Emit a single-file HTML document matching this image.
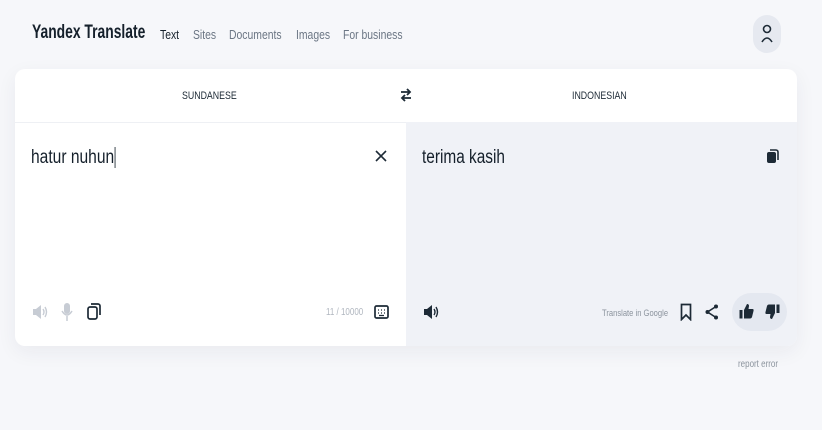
<!DOCTYPE html>
<html><head><meta charset="utf-8"><style>
*{margin:0;padding:0;box-sizing:border-box}
body{width:822px;height:430px;background:#f6f7fa;font-family:"Liberation Sans",sans-serif;color:#1d2a36;position:relative;overflow:hidden}
.a{position:absolute;white-space:nowrap;transform:scaleX(.8);transform-origin:0 0}
.b{position:absolute}
.card{position:absolute;left:15px;top:69px;width:782px;height:277px;background:#fff;border-radius:10px;overflow:hidden;box-shadow:0 6px 20px rgba(30,40,70,.06)}
.right{position:absolute;left:391px;top:53px;width:391px;height:224px;background:#f0f2f7}
.line{position:absolute;left:0;top:53px;width:391px;height:1px;background:#eef0f4}
svg{position:absolute}
</style></head><body>
<div class="a" style="left:32px;top:22px;font-size:19px;font-weight:bold;color:#15202b;transform:scaleX(.73)">Yandex Translate</div>
<div class="a" style="left:160px;top:27px;font-size:13px;color:#15202b">Text</div>
<div class="a" style="left:193px;top:27px;font-size:13px;color:#6b7684">Sites</div>
<div class="a" style="left:229px;top:27px;font-size:13px;color:#6b7684">Documents</div>
<div class="a" style="left:296px;top:27px;font-size:13px;color:#6b7684">Images</div>
<div class="a" style="left:343px;top:27px;font-size:13px;color:#6b7684">For business</div>
<div class="b" style="left:753px;top:15px;width:28px;height:38px;border-radius:14px;background:#e6e9f0"></div>
<svg style="left:760px;top:24px" width="14" height="20" viewBox="0 0 14 20"><circle cx="7" cy="5" r="3.5" fill="none" stroke="#1d2a36" stroke-width="1.6"/><path d="M2 18 Q7 10 12 18" fill="none" stroke="#1d2a36" stroke-width="1.6"/></svg>
<div class="card">
 <div class="right"></div><div class="line"></div>
 <div class="a" style="left:167px;top:21px;font-size:11px">SUNDANESE</div>
 <div class="a" style="left:557px;top:21px;font-size:11px">INDONESIAN</div>
 <svg style="left:385px;top:19px" width="12" height="14" viewBox="0 0 12 14"><path d="M1 4H10M7 1L10 4L7 7M11 10H2M5 7L2 10L5 13" fill="none" stroke="#1d2a36" stroke-width="1.8"/></svg>
 <div class="a" style="left:16px;top:78px;font-size:19px;color:#15202b;transform:scaleX(.82)">hatur nuhun<span style="border-left:1px solid #15202b;margin-left:1px"></span></div>
 <svg style="left:360px;top:81px" width="12" height="12" viewBox="0 0 12 12"><path d="M1 1L11 11M11 1L1 11" stroke="#1d2a36" stroke-width="1.6"/></svg>
 <div class="a" style="left:407px;top:78px;font-size:19px;color:#15202b;transform:scaleX(.81)">terima kasih</div>
 <svg style="left:751px;top:80px" width="13" height="15" viewBox="0 0 13 15"><rect x="1" y="3" width="9" height="11" rx="2" fill="#1d2a36"/><path d="M4 1H10a2 2 0 0 1 2 2V11" fill="none" stroke="#1d2a36" stroke-width="1.6"/></svg>
 <svg style="left:17px;top:235px" width="16" height="16" viewBox="0 0 16 16"><path d="M1 5H4L9 1V15L4 11H1Z" fill="#c7ccd4"/><path d="M11 5Q13 8 11 11M13 3Q16 8 13 13" fill="none" stroke="#c7ccd4" stroke-width="1.4"/></svg>
 <svg style="left:46px;top:233px" width="12" height="20" viewBox="0 0 12 20"><rect x="3" y="1" width="6" height="11" rx="3" fill="#c7ccd4"/><path d="M1 9Q6 17 11 9M6 14V19" fill="none" stroke="#c7ccd4" stroke-width="1.5"/></svg>
 <svg style="left:72px;top:234px" width="14" height="17" viewBox="0 0 14 17"><rect x="1" y="4" width="9" height="12" rx="2" fill="none" stroke="#1d2a36" stroke-width="1.7"/><path d="M4 1H11a2 2 0 0 1 2 2V12" fill="none" stroke="#1d2a36" stroke-width="1.7"/></svg>
 <div class="a" style="left:311px;top:238px;font-size:10px;color:#b0b6bf">11 / 10000</div>
 <svg style="left:359px;top:236px" width="15" height="14" viewBox="0 0 15 14"><rect x="1" y="1" width="13" height="12" rx="1.5" fill="none" stroke="#1d2a36" stroke-width="1.7"/><path d="M4 5h1M7 5h1M10 5h1M4 8h1M7 8h1M10 8h1M5 10.5h5" stroke="#1d2a36" stroke-width="1.2"/></svg>
 <svg style="left:408px;top:235px" width="16" height="16" viewBox="0 0 16 16"><path d="M1 5H4L9 1V15L4 11H1Z" fill="#1d2a36"/><path d="M11 5Q13 8 11 11M13 3Q16 8 13 13" fill="none" stroke="#1d2a36" stroke-width="1.4"/></svg>
 <div class="a" style="left:587px;top:239px;font-size:9.5px;color:#8b939d">Translate in Google</div>
 <svg style="left:665px;top:234px" width="12" height="18" viewBox="0 0 12 18"><path d="M1.5 1.5H10.5V16.5L6 12L1.5 16.5Z" fill="none" stroke="#1d2a36" stroke-width="1.7"/></svg>
 <svg style="left:690px;top:235px" width="14" height="16" viewBox="0 0 14 16"><circle cx="11" cy="2.5" r="2" fill="#1d2a36"/><circle cx="2.5" cy="8" r="2" fill="#1d2a36"/><circle cx="11" cy="13.5" r="2" fill="#1d2a36"/><path d="M11 2.5L2.5 8L11 13.5" fill="none" stroke="#1d2a36" stroke-width="1.6"/></svg>
 <div class="b" style="left:717px;top:224px;width:55px;height:38px;border-radius:19px;background:#e4e8f0"></div>
 <svg style="left:724px;top:234px" width="15" height="16" viewBox="0 0 15 16"><rect x="0.5" y="7" width="3" height="8.5" fill="#1d2a36"/><path d="M5 7L8 1Q10 1 10 3L9.5 6H13.5Q15 6 14.5 8L13 14Q12.5 15.5 11 15.5H5Z" fill="#1d2a36"/></svg>
 <svg style="left:750px;top:235px" width="15" height="16" viewBox="0 0 15 16"><g transform="translate(0,16) scale(1,-1)"><rect x="11.5" y="7" width="3" height="8.5" fill="#1d2a36"/><path d="M10 7L7 1Q5 1 5 3L5.5 6H1.5Q0 6 0.5 8L2 14Q2.5 15.5 4 15.5H10Z" fill="#1d2a36"/></g></svg>
</div>
<div class="a" style="left:738px;top:359px;font-size:10px;color:#8b939d">report error</div>
</body></html>
